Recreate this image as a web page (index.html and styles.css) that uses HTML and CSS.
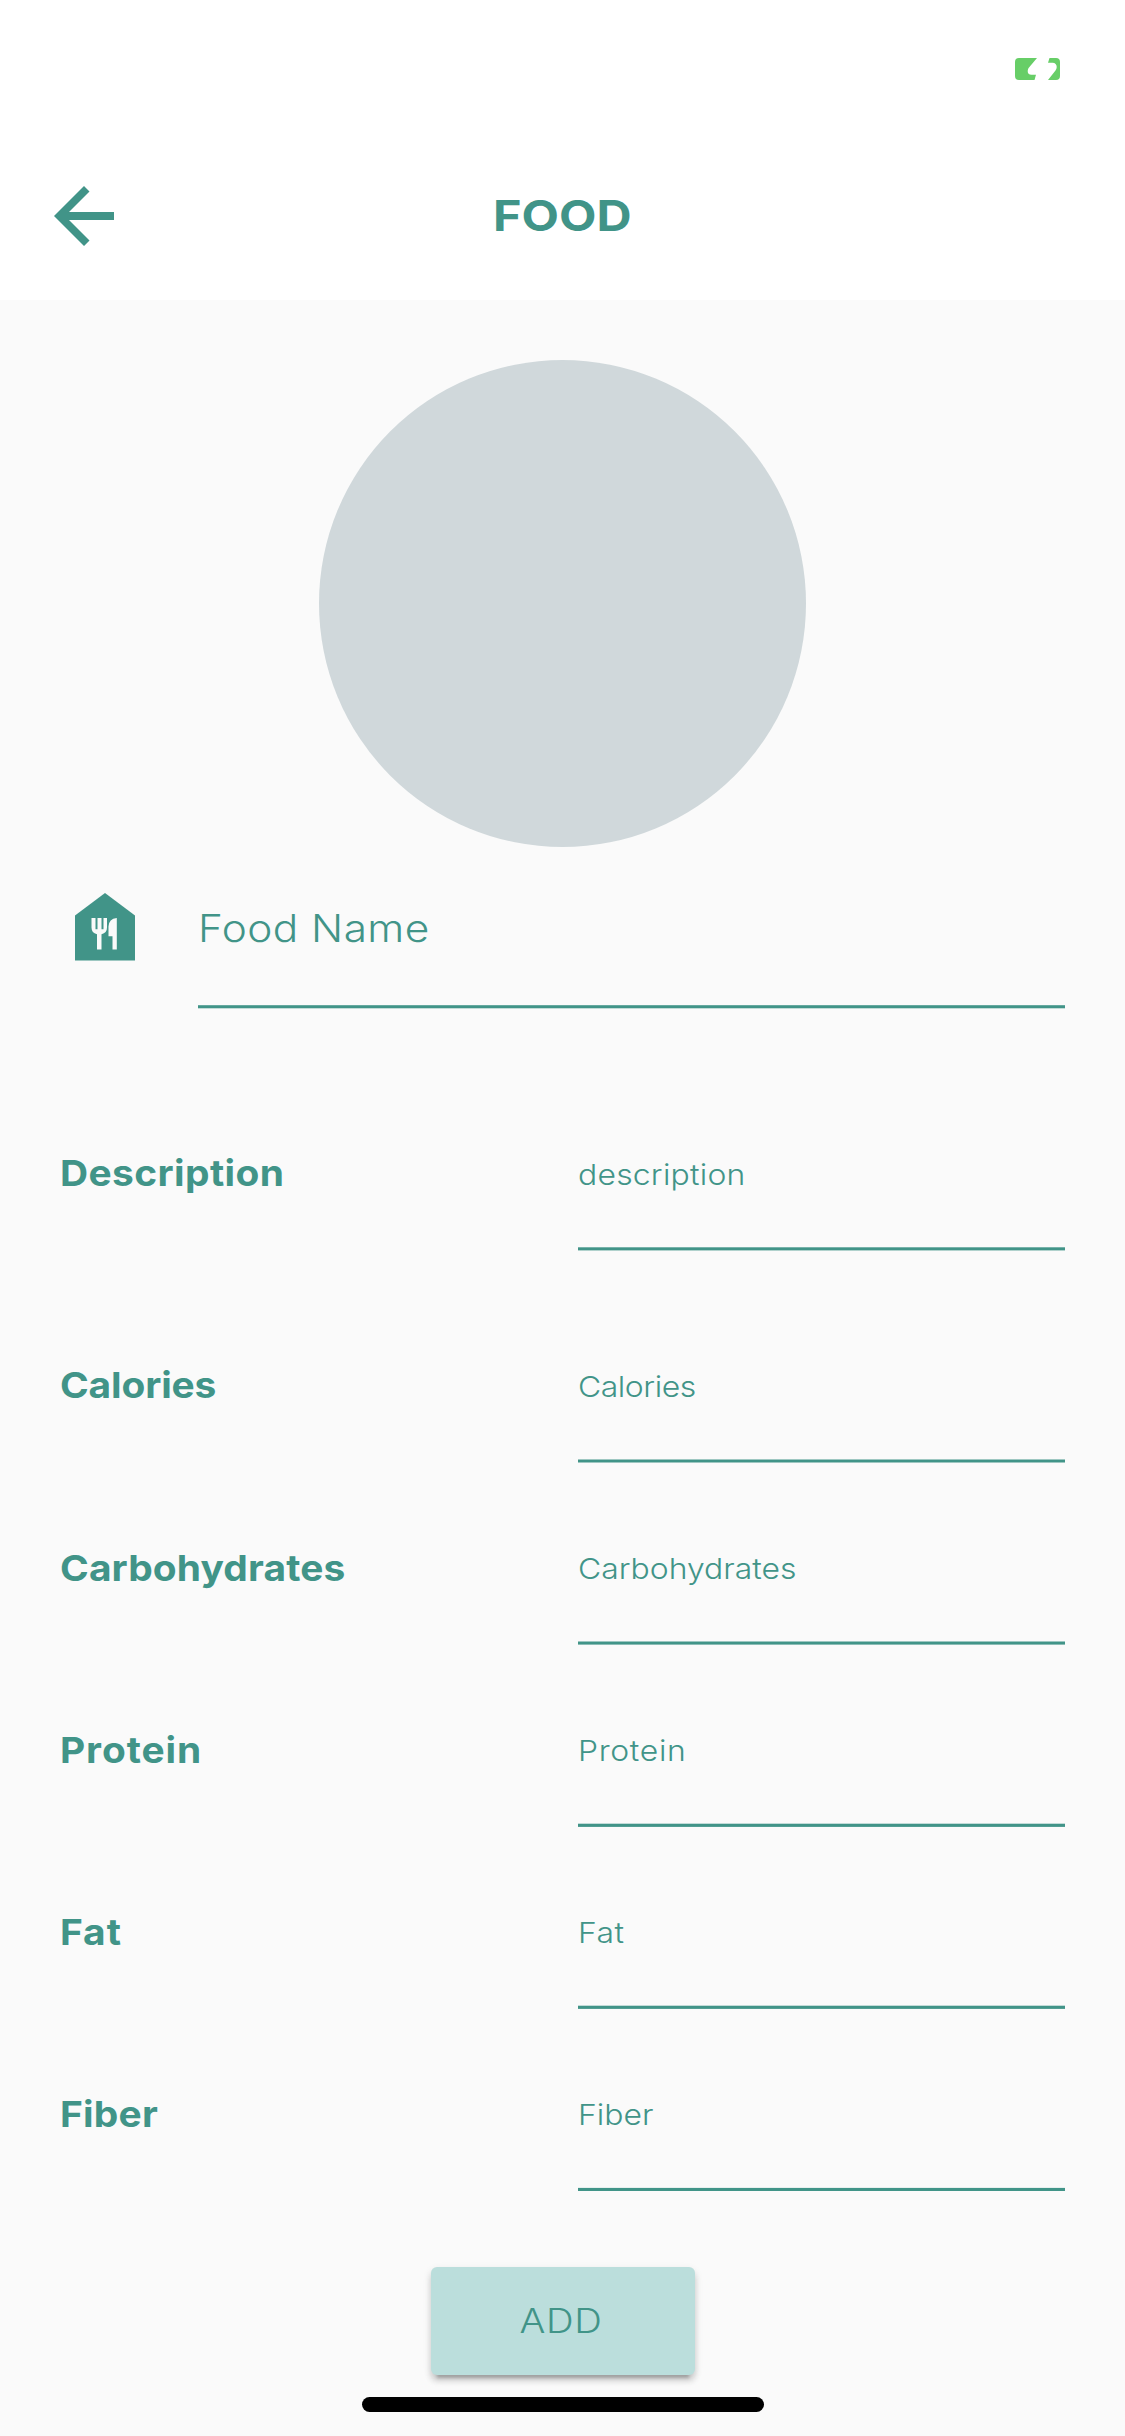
FILE: index.html
```
<!DOCTYPE html>
<html lang="en">
<head>
<meta charset="utf-8">
<title>Food</title>
<link rel="stylesheet" href="styles.css">
</head>
<body>
<div class="screen">
  <div class="status">
    <svg class="battery" width="45" height="22" viewBox="0 0 45 22">
      <path fill="#67ce67" d="M4 0H22L14 9.500C12 12 12 16.800 16.500 16.800H21L19.500 22H4Q0 22 0 18V4Q0 0 4 0ZM34.500 0H41Q45 0 45 4V18Q45 22 41 22H33L40.500 12.500C43 9 41.500 4.800 37.500 4.800H33Z"/>
    </svg>
  </div>
  <header class="header">
    <svg class="back" width="60" height="60" viewBox="0 0 60 60">
      <path fill="#419488" d="M0 30L30 0L35.500 5.500L15 26H60V34H15L35.500 54.500L30 60Z"/>
    </svg>
    <h1 class="title"><span class="wide">FOOD</span></h1>
  </header>
  <main class="content">
    <div class="photo"></div>
    <div class="row row-name">
      <svg class="food-icon" width="60" height="68" viewBox="0 0 60 68">
        <path fill="#419488" d="M0 22.500L30 0L60 22.500V67.500H0Z"/>
        <path fill="#fafafa" d="M16.500 25H20.500V36.300H22.500V25H26.500V36.300H28.500V25H32V34.500Q32 40 26.500 41.200V56.500H22V41.200Q16.500 40 16.500 34.500ZM41.800 25V56.500H37.500V43.200H33.500V33.500Q33.800 25.800 41.800 25Z"/>
      </svg>
      <div class="field field-name"><span class="wide">Food Name</span></div>
    </div>
    <div class="row row-description">
      <div class="label"><span class="wide">Description</span></div>
      <div class="field"><span class="wide">description</span></div>
    </div>
    <div class="row row-calories">
      <div class="label"><span class="wide">Calories</span></div>
      <div class="field"><span class="wide">Calories</span></div>
    </div>
    <div class="row row-carbs">
      <div class="label"><span class="wide">Carbohydrates</span></div>
      <div class="field"><span class="wide">Carbohydrates</span></div>
    </div>
    <div class="row row-protein">
      <div class="label"><span class="wide">Protein</span></div>
      <div class="field"><span class="wide">Protein</span></div>
    </div>
    <div class="row row-fat">
      <div class="label"><span class="wide">Fat</span></div>
      <div class="field"><span class="wide">Fat</span></div>
    </div>
    <div class="row row-fiber">
      <div class="label"><span class="wide">Fiber</span></div>
      <div class="field"><span class="wide">Fiber</span></div>
    </div>
    <button class="add"><span class="wide">ADD</span></button>
    <div class="home-indicator"></div>
  </main>
</div>
</body>
</html>
```
FILE: styles.css
```
* { box-sizing: border-box; }
body { margin: 0; background: #fafafa; }
.screen {
  width: 1125px;
  height: 2436px;
  overflow: hidden;
  color: #419488;
  font-family: Inter, "Liberation Sans", sans-serif;
}
.wide {
  display: inline-block;
  transform: scaleX(var(--stretch, 1.1));
  transform-origin: left center;
  letter-spacing: var(--track, 0);
  white-space: nowrap;
}
.status {
  height: 132px;
  padding: 58px 65px 0 0;
  background: #fff;
  display: flex;
  justify-content: flex-end;
}
.header {
  height: 168px;
  padding: 0 54px;
  background: #fff;
  display: grid;
  grid-template-columns: 60px 1fr 60px;
  align-items: center;
}
.back { display: block; }
.title {
  --stretch: 1.13;
  margin: 0;
  padding-bottom: 2px;
  font-size: 43px;
  font-weight: 700;
  line-height: 60px;
  text-align: center;
}
.title .wide { transform-origin: center; }
.content {
  height: 2136px;
  padding-top: 60px;
  display: flex;
  flex-direction: column;
  align-items: center;
}
.photo {
  flex: none;
  width: 487px;
  height: 487px;
  margin-bottom: 1px;
  border-radius: 50%;
  background: #d0d8db;
}
.row {
  flex: none;
  width: 1125px;
  height: 182px;
  padding: 0 60px;
  display: grid;
  grid-template-columns: 518px 1fr;
  align-items: end;
}
.row-name {
  height: 161px;
  padding-left: 75px;
  grid-template-columns: 123px 1fr;
}
.row-description { height: 242px; }
.row-calories { height: 212px; }
.food-icon { display: block; margin-bottom: 48px; }
.label {
  --stretch: 1.08;
  height: 97px;
  font-size: 36px;
  font-weight: 700;
  line-height: 40px;
}
.field {
  height: 96px;
  font-size: 29px;
  font-weight: 300;
  line-height: 40px;
}
.field::after {
  content: "";
  display: block;
  height: 4px;
  margin-top: 52px;
  background: linear-gradient(
    rgb(65 148 136 / var(--top, .3)) 0 1px,
    #419488 1px 3px,
    rgb(65 148 136 / var(--bottom, .9)) 3px 4px);
}
.field-name { height: 101px; font-size: 38.5px; --track: .4px; --top: .8; --bottom: .3; }
.field-name::after { margin-top: 57px; }
.row-description .label, .row-calories .label { height: 98px; }
.row-description .label { --track: .38px; }
.row-description .field { --track: .2px; --top: .7; --bottom: .4; }
.row-calories .label { --track: -.13px; }
.row-calories .field { --track: -.4px; --top: .5; --bottom: .5; }
.row-carbs .label { --track: .13px; }
.row-carbs .field { --top: .5; --bottom: .6; }
.row-protein .label { --track: .85px; }
.row-protein .field { --track: .6px; }
.row-fat .label { --track: .88px; }
.row-fat .field { --track: .4px; }
.row-fiber .label { --track: .2px; }
.row-fiber .field { --top: .1; --bottom: 1; }
.add {
  flex: none;
  width: 264px;
  height: 108px;
  margin: 76px 0 22px;
  padding: 0 2px 0 0;
  border: 0;
  border-radius: 6px;
  background: #bbdedc;
  box-shadow: 0 9px 3px -6px rgb(0 0 0 / .2), 0 6px 6px rgb(0 0 0 / .14), 0 3px 9px rgb(0 0 0 / .1);
  color: inherit;
  font: 300 33.4px/40px Inter, "Liberation Sans", sans-serif;
  --stretch: 1.15;
  --track: .5px;
}
.add .wide { transform-origin: center; }
.home-indicator {
  flex: none;
  width: 402px;
  height: 15px;
  border-radius: 8px;
  background: #000;
}
```
